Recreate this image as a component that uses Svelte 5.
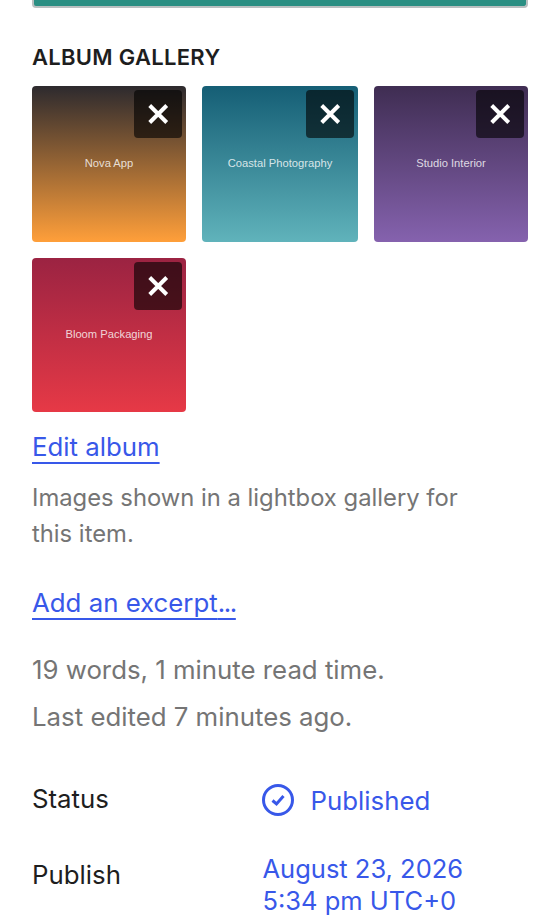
<script>
	const images = [
		{ label: 'Nova App', from: '#2d2a2e', to: '#ff9f3a' },
		{ label: 'Coastal Photography', from: '#155e75', to: '#60b3bb' },
		{ label: 'Studio Interior', from: '#3f2d52', to: '#8562ae' },
		{ label: 'Bloom Packaging', from: '#9b2342', to: '#e63946' }
	];
</script>

<div class="panel">
	<div class="featured"></div>

	<h2>ALBUM GALLERY</h2>
	<ul class="gallery">
		{#each images as image}
			<li class="thumb" style="background: linear-gradient({image.from}, {image.to})">
				<span>{image.label}</span>
				<button type="button" aria-label="Remove {image.label}">
					<svg width="24" height="24" viewBox="0 0 24 24">
						<path d="M3.7 3.5 L20.7 20.5 M20.7 3.5 L3.7 20.5" />
					</svg>
				</button>
			</li>
		{/each}
	</ul>

	<a class="link" href="#album">Edit album</a>
	<p class="help">Images shown in a lightbox gallery for this item.</p>

	<a class="link excerpt" href="#excerpt">Add an excerpt<span class="dots">...</span></a>

	<div class="meta">
		<p>19 words, 1 minute read time.</p>
		<p>Last edited 7 minutes ago.</p>
	</div>

	<div class="row status">
		<span class="key">Status</span>
		<span class="value">
			<svg width="34" height="34" viewBox="0 0 34 34">
				<circle cx="17" cy="17" r="14.5" />
				<path d="M11.5 17.5 L15.5 21 L22.5 13" />
			</svg>
			Published
		</span>
	</div>
	<div class="row publish">
		<span class="key">Publish</span>
		<span class="value date">August 23, 2026<br />5:34 pm UTC+0</span>
	</div>
</div>

<style>
	:global(body) {
		margin: 0;
		background: #fff;
	}

	.panel {
		height: 920px;
		overflow: hidden;
		box-sizing: border-box;
		padding: 0 24px 0 32px;
		font-family: Inter, "Liberation Sans", sans-serif;
		font-size: 25.8px;
		color: #1e1e1e;
	}

	.featured {
		height: 6px;
		background: #2a8f83;
		border: 2px solid #b9bfc0;
		border-top: 0;
		border-radius: 0 0 4px 4px;
	}

	h2 {
		margin: 36px 0 16px;
		font-size: 22px;
		line-height: 26px;
		font-weight: 600;
		letter-spacing: 0.3px;
	}

	.gallery {
		display: grid;
		grid-template-columns: 154px 156px 154px;
		grid-template-rows: 156px 154px;
		gap: 16px;
		margin: 0 0 17px;
		padding: 0;
		list-style: none;
	}

	.thumb {
		position: relative;
		display: flex;
		align-items: center;
		justify-content: center;
		padding-bottom: 2px;
		border-radius: 4px;
		font-family: "Liberation Sans", sans-serif;
		font-size: 11.2px;
		color: rgba(255, 255, 255, 0.8);
	}

	.thumb button {
		position: absolute;
		top: 4px;
		right: 4px;
		width: 48px;
		height: 48px;
		display: flex;
		align-items: center;
		justify-content: center;
		padding: 0;
		border: 0;
		border-radius: 4px;
		background: rgba(0, 0, 0, 0.6);
	}

	.thumb path {
		fill: none;
		stroke: #fff;
		stroke-width: 4;
	}

	.link {
		display: inline-block;
		color: #3858e9;
		text-decoration: underline;
		text-underline-offset: 6px;
		text-decoration-thickness: 2px;
		line-height: 36px;
	}

	.dots {
		letter-spacing: -1.4px;
	}

	.help {
		margin: 15px 0 0;
		max-width: 440px;
		font-size: 23.8px;
		line-height: 36px;
		color: #757575;
	}

	.excerpt {
		margin-top: 33px;
	}

	.meta {
		margin-top: 31px;
		line-height: 36px;
		color: #757575;
	}

	.meta p {
		margin: 0 0 11px;
	}

	.row {
		display: grid;
		grid-template-columns: 230px 1fr;
		align-items: start;
	}

	.status {
		margin-top: 48px;
	}

	.publish {
		margin-top: 36px;
	}

	.publish .key {
		margin-top: 6px;
	}

	.value {
		display: flex;
		align-items: center;
		gap: 15.5px;
		color: #3858e9;
	}

	.value svg {
		margin-left: -1px;
	}

	.value.date {
		display: block;
		padding-left: 0.5px;
		font-size: 25.5px;
		line-height: 32px;
	}

	.value circle,
	.value path {
		fill: none;
		stroke: #3858e9;
		stroke-width: 3;
	}
</style>
